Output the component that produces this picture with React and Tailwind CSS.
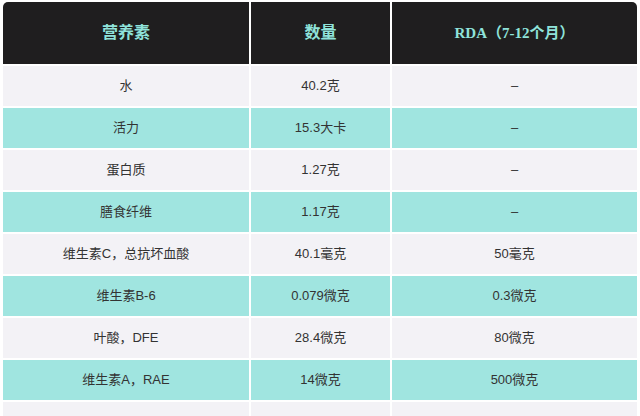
import React from 'react';

const rows = [
  ['水', '40.2克', '–'],
  ['活力', '15.3大卡', '–'],
  ['蛋白质', '1.27克', '–'],
  ['膳食纤维', '1.17克', '–'],
  ['维生素C，总抗坏血酸', '40.1毫克', '50毫克'],
  ['维生素B-6', '0.079微克', '0.3微克'],
  ['叶酸，DFE', '28.4微克', '80微克'],
  ['维生素A，RAE', '14微克', '500微克'],
  ['', '', ''],
];

function App() {
  return (
    <div
      className="w-[640px] h-[416px] overflow-hidden bg-white pt-[2px] pl-[3px]"
      style={{ fontFamily: '"Liberation Sans", "Noto Sans CJK SC", sans-serif' }}
    >
      <div className="grid grid-cols-[246px_139px_245px] gap-[2px]">
        <div className="h-[62px] flex items-center justify-center bg-[#1f1e1f] rounded-tl-[5px] text-[16px] font-bold text-[#8fe3da]">营养素</div>
        <div className="h-[62px] flex items-center justify-center bg-[#1f1e1f] text-[16px] font-bold text-[#8fe3da]">数量</div>
        <div className="h-[62px] flex items-center justify-center bg-[#1f1e1f] rounded-tr-[5px] text-[15px] font-bold text-[#8fe3da]" style={{ fontFamily: '"Liberation Serif", "Noto Sans CJK SC", serif' }}>RDA（7-12个月）</div>
        {rows.map((r, i) =>
          r.map((c, j) => (
            <div
              key={i + '-' + j}
              className={
                'h-[40px] flex items-center justify-center text-[13px] text-[#333] ' +
                (i % 2 === 0 ? 'bg-[#f3f2f6]' : 'bg-[#a0e5e0]')
              }
            >
              {c}
            </div>
          ))
        )}
      </div>
    </div>
  );
}

export default App;
